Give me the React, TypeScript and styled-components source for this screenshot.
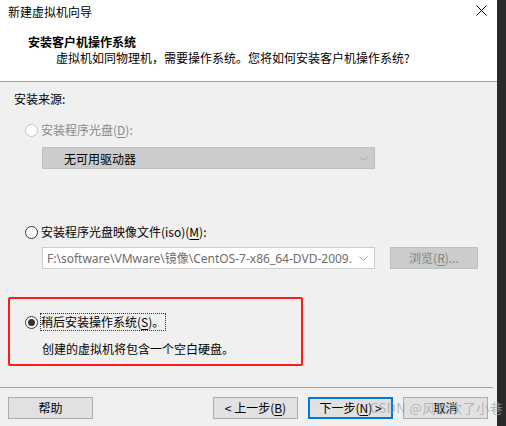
import React from "react";
import styled, { createGlobalStyle } from "styled-components";

const Global = createGlobalStyle`
  html, body { margin: 0; padding: 0; background: #262626; }
  body { font-family: "Noto Sans CJK SC", "Noto Sans", sans-serif; font-size: 12px; color: #000; }
  * { box-sizing: border-box; }
`;

const Screen = styled.div`
  display: flex;
  width: 506px;
  height: 426px;
  overflow: hidden;
  position: relative;
`;

const Window = styled.div`
  width: 497px;
  height: 426px;
  display: flex;
  flex-direction: column;
  background: #f0f0f0;
`;

const EdgeBar = styled.div`
  flex: 1;
  background: #2a2a2a;
`;

const Header = styled.div`
  height: 81px;
  background: #fff;
  display: flex;
  flex-direction: column;
`;

const TitleBar = styled.div`
  height: 24px;
  display: flex;
  justify-content: space-between;
  align-items: flex-start;
  padding: 4px 10px 0 8px;
  line-height: 16px;
`;

const CloseIcon = styled.svg`
  margin-top: 1px;
  display: block;
`;

const HeaderTitle = styled.div`
  margin: 10px 0 0 28px;
  font-weight: 700;
  line-height: 16px;
`;

const HeaderSub = styled.div`
  margin-left: 56px;
  line-height: 16px;
`;

const Divider = styled.div<{ $inset?: number }>`
  height: 1px;
  background: #a0a0a0;
  margin-right: ${(p) => p.$inset ?? 0}px;
`;

const Body = styled.div`
  display: flex;
  flex-direction: column;
  padding: 9px 0 21px 14px;
`;

const Label = styled.div`
  line-height: 16px;
`;

const RadioRow = styled.div<{ $top: number; $indent?: number; $disabled?: boolean }>`
  display: flex;
  align-items: center;
  gap: 3px;
  margin-top: ${(p) => p.$top}px;
  margin-left: ${(p) => p.$indent ?? 11}px;
  line-height: 16px;
  color: ${(p) => (p.$disabled ? "#8a8a8a" : "#000")};
`;

const Radio = styled.span<{ $checked?: boolean; $disabled?: boolean }>`
  width: 13px;
  height: 13px;
  border-radius: 50%;
  border: 1px solid ${(p) => (p.$disabled ? "#c4c4c4" : "#333")};
  background: #fff;
  display: flex;
  align-items: center;
  justify-content: center;
  flex-shrink: 0;
  &::after {
    content: "";
    width: 7px;
    height: 7px;
    border-radius: 50%;
    background: #333;
    display: ${(p) => (p.$checked ? "block" : "none")};
  }
`;

const Focus = styled.span`
  outline: 1px dotted #333;
  outline-offset: 0px;
  padding: 0 1px 0 0;
`;

const U = styled.span`
  text-decoration: underline;
  text-underline-offset: 2px;
`;

const FieldRow = styled.div<{ $top: number }>`
  display: flex;
  gap: 15px;
  margin: ${(p) => p.$top}px 0 0 28px;
`;

const Combo = styled.div<{ $disabled?: boolean; $pad: number }>`
  width: 333px;
  height: 22px;
  display: flex;
  align-items: center;
  justify-content: space-between;
  padding: 0 6px 0 ${(p) => p.$pad}px;
  background: ${(p) => (p.$disabled ? "#cccccc" : "#fff")};
  border: 1px solid ${(p) => (p.$disabled ? "#bfbfbf" : "#cccccc")};
  color: ${(p) => (p.$disabled ? "#000" : "#6d6d6d")};
  white-space: nowrap;
  overflow: hidden;
`;

const ComboText = styled.span<{ $latin?: boolean }>`
  overflow: hidden;
  font-family: ${(p) =>
    p.$latin ? `"Noto Sans", "Noto Sans CJK SC", sans-serif` : `"Noto Sans CJK SC", sans-serif`};
`;

const Chevron = () => (
  <svg width="9" height="5" viewBox="0 0 9 5" style={{ flexShrink: 0 }}>
    <path d="M0.5 0.5 L4.5 4.5 L8.5 0.5" fill="none" stroke="#a8a8a8" strokeWidth="1" />
  </svg>
);

const Button = styled.button<{ $default?: boolean; $disabled?: boolean; $w?: number }>`
  width: ${(p) => p.$w ?? 85}px;
  height: 22px;
  padding: 0;
  margin: 0;
  font-family: "Noto Sans CJK SC", sans-serif;
  font-size: 12px;
  line-height: 16px;
  color: ${(p) => (p.$disabled ? "#838383" : "#000")};
  background: ${(p) => (p.$disabled ? "#cccccc" : "#e1e1e1")};
  border: ${(p) => (p.$default ? "2px solid #0078d7" : p.$disabled ? "1px solid #bfbfbf" : "1px solid #adadad")};
  display: flex;
  align-items: center;
  justify-content: center;
`;

const Highlight = styled.div`
  margin: 28px 0 0 -6px;
  width: 295px;
  height: 69px;
  border: 2px solid #ff1a1a;
  border-radius: 2px;
  padding: 15px 0 0 15px;
  display: flex;
  flex-direction: column;
`;

const Desc = styled.div`
  margin: 11px 0 0 17px;
  line-height: 16px;
`;

const Footer = styled.div`
  display: flex;
  padding: 9px 9px 0 8px;
  position: relative;
`;

const Spacer = styled.div`
  flex: 1;
`;

const NavGroup = styled.div`
  display: flex;
  gap: 10px;
`;

const Watermark = styled.div`
  position: absolute;
  left: 370px;
  top: 11px;
  font-family: "Noto Sans CJK SC", sans-serif;
  font-size: 13px;
  line-height: 18px;
  letter-spacing: 0.5px;
  color: rgba(160, 160, 160, 0.7);
  white-space: nowrap;
  pointer-events: none;
`;

export default function App() {
  return (
    <>
      <Global />
      <Screen>
        <Window>
          <Header>
            <TitleBar>
              <span>新建虚拟机向导</span>
              <CloseIcon width="11" height="11" viewBox="0 0 11 11">
                <path d="M0.5 0.5 L10.5 10.5 M10.5 0.5 L0.5 10.5" stroke="#000" strokeWidth="1" />
              </CloseIcon>
            </TitleBar>
            <HeaderTitle>安装客户机操作系统</HeaderTitle>
            <HeaderSub>虚拟机如同物理机，需要操作系统。您将如何安装客户机操作系统?</HeaderSub>
          </Header>
          <Divider />
          <Body>
            <Label>安装来源:</Label>
            <RadioRow $top={15} $disabled>
              <Radio $disabled />
              <span>
                安装程序光盘(<U>D</U>):
              </span>
            </RadioRow>
            <FieldRow $top={9}>
              <Combo $disabled $pad={21}>
                <ComboText>无可用驱动器</ComboText>
                <Chevron />
              </Combo>
            </FieldRow>
            <RadioRow $top={55}>
              <Radio />
              <span>
                安装程序光盘映像文件(iso)(<U>M</U>):
              </span>
            </RadioRow>
            <FieldRow $top={7}>
              <Combo $pad={4}>
                <ComboText $latin>F:\software\VMware\镜像\CentOS-7-x86_64-DVD-2009.</ComboText>
                <Chevron />
              </Combo>
              <Button $disabled $w={88}>
                浏览(<U>R</U>)...
              </Button>
            </FieldRow>
            <Highlight>
              <RadioRow $top={0} $indent={0}>
                <Radio $checked />
                <Focus>
                  稍后安装操作系统(<U>S</U>)。
                </Focus>
              </RadioRow>
              <Desc>创建的虚拟机将包含一个空白硬盘。</Desc>
            </Highlight>
          </Body>
          <Divider $inset={4} />
          <Footer>
            <Button>帮助</Button>
            <Spacer />
            <NavGroup>
              <Button>
                &lt; 上一步(<U>B</U>)
              </Button>
              <Button $default>
                下一步(<U>N</U>) &gt;
              </Button>
              <Button>取消</Button>
            </NavGroup>
            <Watermark>CSDN @风吹吹了小巷</Watermark>
          </Footer>
        </Window>
        <EdgeBar />
      </Screen>
    </>
  );
}
